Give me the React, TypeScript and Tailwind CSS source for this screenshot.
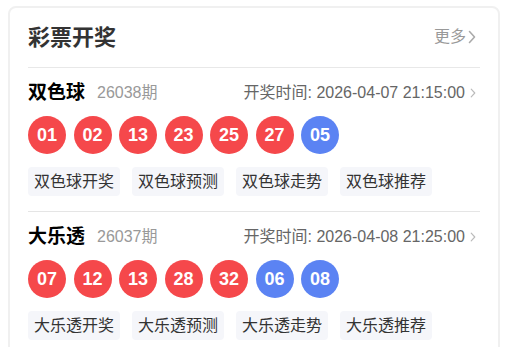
const FONT = { fontFamily: '"Liberation Sans", Arial, "Noto Sans CJK SC", sans-serif' };

type Draw = {
  name: string;
  issue: string;
  time: string;
  red: string[];
  blue: string[];
  links: string[];
};

const DRAWS: Draw[] = [
  {
    name: "双色球",
    issue: "26038期",
    time: "开奖时间: 2026-04-07 21:15:00",
    red: ["01", "02", "13", "23", "25", "27"],
    blue: ["05"],
    links: ["开奖", "预测", "走势", "推荐"],
  },
  {
    name: "大乐透",
    issue: "26037期",
    time: "开奖时间: 2026-04-08 21:25:00",
    red: ["07", "12", "13", "28", "32"],
    blue: ["06", "08"],
    links: ["开奖", "预测", "走势", "推荐"],
  },
];

function Chevron({ className }: { className?: string }) {
  return (
    <svg viewBox="0 0 8 14" className={className} fill="none" stroke="currentColor" strokeWidth="1.6" strokeLinecap="round" strokeLinejoin="round">
      <path d="M1.5 1.5 6.5 7 1.5 12.5" />
    </svg>
  );
}

function Ball({ n, blue }: { n: string; blue?: boolean }) {
  return (
    <div
      className={`flex h-[38px] w-[38px] items-center justify-center rounded-full text-[18px] font-bold text-white ${
        blue ? "bg-[#5b83f3]" : "bg-[#f5484b]"
      }`}
    >
      {n}
    </div>
  );
}

function DrawBlock({ d, last }: { d: Draw; last?: boolean }) {
  return (
    <div className={`pt-[13px] pb-[15px] ${last ? "" : "border-b border-[#e5e5e5]"}`}>
      <div className="flex h-6 items-center">
        <span className="text-[19px] font-bold text-black">{d.name}</span>
        <span className="ml-3 text-[16px] text-[#999]">{d.issue}</span>
        <span className="ml-auto text-[16px] text-[#666]">{d.time}</span>
        <Chevron className="mr-1 ml-[5px] h-[10px] w-[6px] text-[#bbb]" />
      </div>
      <div className="mt-[11px] flex gap-[7.5px]">
        {d.red.map((n, i) => (
          <Ball key={"r" + i} n={n} />
        ))}
        {d.blue.map((n, i) => (
          <Ball key={"b" + i} n={n} blue />
        ))}
      </div>
      <div className="mt-[13px] flex gap-3">
        {d.links.map((l) => (
          <span key={l} className="flex h-[29px] items-center rounded bg-[#f5f6fa] px-[6px] text-[16px] text-[#333]">
            {d.name}
            {l}
          </span>
        ))}
      </div>
    </div>
  );
}

export default function App() {
  return (
    <div className="min-h-[347px] bg-white pl-2 pt-[6px]" style={FONT}>
      <div className="w-[492px] rounded-lg border-2 border-[#f0f0f0] bg-white px-[18px]">
        <div className="flex h-[60px] items-center border-b border-[#e8e8e8] pb-[1px]">
          <h2 className="text-[22px] font-bold text-[#333]">彩票开奖</h2>
          <span className="mr-1 ml-auto flex items-center text-[16px] text-[#999]">
            更多
            <Chevron className="ml-[2px] h-[14px] w-[8px] text-[#aaa]" />
          </span>
        </div>
        {DRAWS.map((d, i) => (
          <DrawBlock key={d.name} d={d} last={i === DRAWS.length - 1} />
        ))}
      </div>
    </div>
  );
}
